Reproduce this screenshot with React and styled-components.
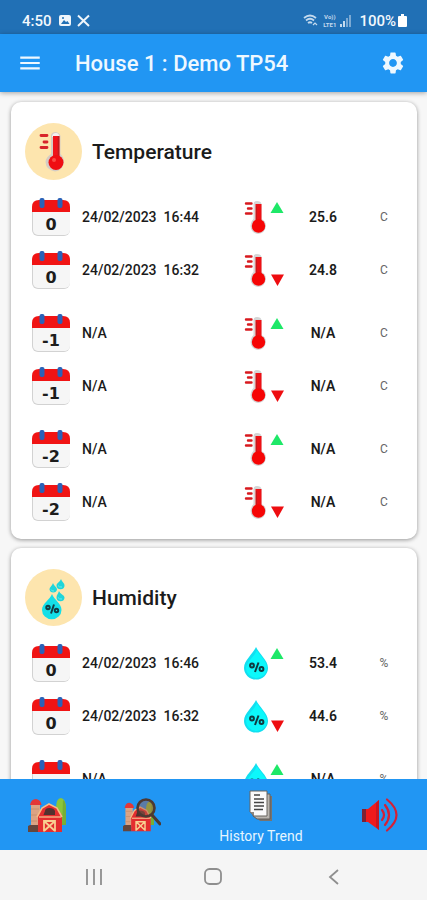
import React from 'react'
import styled, { createGlobalStyle } from 'styled-components'
import { MdMenu, MdSettings } from 'react-icons/md'

const temperature = [
    [
        { day: '0', date: '24/02/2023  16:44', trend: 'up', value: '25.6' },
        { day: '0', date: '24/02/2023  16:32', trend: 'down', value: '24.8' },
    ],
    [
        { day: '-1', date: 'N/A', trend: 'up', value: 'N/A' },
        { day: '-1', date: 'N/A', trend: 'down', value: 'N/A' },
    ],
    [
        { day: '-2', date: 'N/A', trend: 'up', value: 'N/A' },
        { day: '-2', date: 'N/A', trend: 'down', value: 'N/A' },
    ],
]

const humidity = [
    [
        { day: '0', date: '24/02/2023  16:46', trend: 'up', value: '53.4' },
        { day: '0', date: '24/02/2023  16:32', trend: 'down', value: '44.6' },
    ],
    [
        { day: '-1', date: 'N/A', trend: 'up', value: 'N/A' },
        { day: '-1', date: 'N/A', trend: 'down', value: 'N/A' },
    ],
]

const CalendarIcon = ({ day }) => (
    <svg width="38" height="40" viewBox="0 0 38 40">
        <rect x="0" y="5" width="38" height="34" rx="6" fill="#d2d2d2" />
        <rect x="1" y="5" width="37" height="33" rx="5" fill="#f6f6f6" />
        <path d="M0 15V10Q0 3 7 3H31Q38 3 38 10V15Z" fill="#f01414" />
        <rect x="7.500" y="1" width="5" height="10" rx="2" fill="#2a62b8" />
        <rect x="25.500" y="1" width="5" height="10" rx="2" fill="#2a62b8" />
        <text x="19" y="33" textAnchor="middle" fontFamily="DejaVu Sans, sans-serif" fontWeight="700" fontSize="16" fill="#1c1c1c">{day}</text>
    </svg>
)

const Thermometer = () => (
    <>
        <path d="M9.500 8Q9.500 5 13 5Q17 5 17.500 8V23Q22 25 22 30Q21 37.500 14 38Q7 37 6.500 30Q7 25 9.500 23Z" fill="#d5d5d5" />
        <path d="M2 7.500H7.500M4 12.500H7.500M2 17.500H7.500" stroke="#d8191e" strokeWidth="2.400" strokeLinecap="round" />
        <path d="M11.500 8H17.500V25H11.500Z" fill="#ee1015" />
        <path d="M12.500 10V25" stroke="#c41a1c" strokeWidth="1" />
        <circle cx="14.500" cy="30" r="6.700" fill="#f60505" />
    </>
)

const Drop = () => (
    <>
        <path d="M12 5C15 12 24 18 24 26A12 11.500 0 0 1 0 26C0 18 9 12 12 5Z" fill="#12dff0" />
        <path d="M13 8C15 13 23 19 23 26A10.500 10 0 0 1 2 26C3 19 11 14 13 8Z" fill="#0cf8fb" />
        <g fill="none" stroke="#103a40" strokeWidth="2">
            <circle cx="8" cy="23.500" r="1.900" />
            <circle cx="17.500" cy="27" r="1.900" />
            <path d="M14.500 20.500L11 30" />
        </g>
    </>
)

const TrendIcon = ({ kind, trend }) => (
    <svg width="40" height="41" viewBox="0 0 40 41">
        {kind === 'temperature' ? <Thermometer /> : <Drop />}
        {trend === 'up' ? <path d="M33 6L39.500 17H26.500Z" fill="#1ee868" /> : <path d="M27 25.500H40L33.500 37Z" fill="#ee0d10" />}
    </svg>
)

const TemperatureBadge = () => (
    <svg width="57" height="57" viewBox="0 0 57 57">
        <circle cx="28.500" cy="28.500" r="28.500" fill="#fde5ae" />
        <path d="M26 12Q27 9 31 9Q35 10 35.500 13V31Q39 34 39 40Q37 48 30 48.500Q21 47 20.500 39Q21 34 26 31Z" fill="#d5cdc4" />
        <path d="M27 14Q27 10 31 10Q34 10 34.500 14" fill="#f5f0ee" />
        <path d="M16 12.500H22M19 19H22M16 24.500H22" stroke="#d8252a" strokeWidth="2.800" strokeLinecap="round" />
        <path d="M28 13H34.500V35H28Z" fill="#f0141a" />
        <path d="M33.500 13V34" stroke="#bd1c20" strokeWidth="1.500" />
        <circle cx="31" cy="39.500" r="7.500" fill="#ef0d12" />
        <circle cx="29" cy="37" r="2" fill="#fb4a45" />
    </svg>
)

const HumidityBadge = () => (
    <svg width="57" height="57" viewBox="0 0 57 57">
        <circle cx="28.500" cy="28.500" r="28.500" fill="#fde5ae" />
        <path d="M27 25C29 31 36.500 34 36.500 41A9.700 9.300 0 0 1 17 41C17 34 25 31 27 25Z" fill="#14dfe8" />
        <path d="M36 10C37 13 39.500 14 39.500 16.500A3.800 3.500 0 0 1 31.500 16.500C31.500 14 35 13 36 10Z" fill="#1fd5da" />
        <path d="M28 14C29 17 32 18 32 20.500A3.800 3.500 0 0 1 24.500 20.500C24.500 18 27 17 28 14Z" fill="#1fd5da" />
        <path d="M34 22C35 25 39.500 26 39.500 28.500A3.800 3.500 0 0 1 31.500 28.500C31.500 26 33 25 34 22Z" fill="#1fd5da" />
        <path d="M33 16.500Q34 18.500 37 18M26 20.500Q27 22.500 29 22M33 28.500Q34 30.500 37 30" stroke="#64edf0" strokeWidth="1" fill="none" />
        <g fill="none" stroke="#123c44" strokeWidth="2">
            <circle cx="23" cy="38.500" r="1.700" />
            <circle cx="31.500" cy="41.500" r="1.700" />
            <path d="M29 35.500L26 44.500" />
        </g>
    </svg>
)

const Barn = () => (
    <>
        <path d="M28 12Q28 1 33 1Q38 2 38 12V28H29Z" fill="#8cc63a" />
        <path d="M35 3Q38 5 38 12V28H34Z" fill="#76ae35" />
        <rect x="3" y="7" width="9" height="23" fill="#dba384" />
        <path d="M3 12H11M3 18H11M3 24H9" stroke="#c8906e" strokeWidth="1" />
        <path d="M2 8Q3 2 8 2Q13 3 13.500 8Z" fill="#e33737" />
        <path d="M0 29L2 28H10V35H0Z" fill="#65463c" />
        <path d="M10 18L14 11L21 7L29 11L34 18V35H10Z" fill="#e42d2f" />
        <path d="M9 20L14 11L21 7L29 11L34 20" fill="none" stroke="#f6bc85" strokeWidth="1.600" />
        <path d="M17 14Q17 11 21.500 11Q26 11 27 14V18H15.500Z" fill="#52312f" />
        <path d="M11 20H33" stroke="#f6cc94" strokeWidth="1.200" />
        <path d="M16 34.500V24H27V34.500M16 24L27 34M27 24L16 34" fill="none" stroke="#f8cf91" strokeWidth="1.800" />
    </>
)

const HouseIcon = () => (
    <svg width="38" height="36" viewBox="0 0 38 36"><Barn /></svg>
)

const HouseSearchIcon = () => (
    <svg width="38" height="36" viewBox="0 0 38 36">
        <svg x="0" y="4" width="31" height="31" viewBox="0 0 38 36" preserveAspectRatio="none"><Barn /></svg>
        <circle cx="23" cy="11" r="8.500" fill="#a25b4c" fillOpacity=".45" stroke="#4d3933" strokeWidth="2.600" />
        <path d="M29 18L37 27" stroke="#4d3933" strokeWidth="3" strokeLinecap="round" />
    </svg>
)

const HistoryIcon = () => (
    <svg width="24" height="32" viewBox="0 0 24 32">
        <path d="M7 6H23V31H11L7 27Z" fill="#77736f" />
        <path d="M4 4H21V29H8L4 26Z" fill="#b9b5af" stroke="#625e5a" strokeWidth="1" />
        <path d="M1 1H18V26H5L1 22Z" fill="#fafafa" stroke="#69645f" strokeWidth="1" />
        <path d="M1 22H5V26Z" fill="#8b8782" />
        <path d="M5 5H11M5 9H15M5 12.500H15M5 16H15M5 19.500H14" stroke="#454545" strokeWidth="1.400" />
    </svg>
)

const SpeakerIcon = () => (
    <svg width="38" height="36" viewBox="0 0 38 36">
        <path d="M1 12H7L18 3V33L7 25H1Z" fill="#f01a1c" />
        <path d="M1 12H5V25H1Z" fill="#7b2335" />
        <path d="M15 6L18 3V33L15 30Z" fill="#c91622" />
        <path d="M21 13Q25 18 21 23M24 8Q32 18 24 28M26 2.500Q45 18 26 33.500" fill="none" stroke="#d52035" strokeWidth="2.200" strokeLinecap="round" />
    </svg>
)

const StatusIcons = () => (
    <svg width="32" height="13" viewBox="0 0 32 13" fill="none">
        <rect x="0" y="1" width="12" height="11" rx="2" fill="#eef5fb" />
        <path d="M2 10L5 6L7 8L8.500 7L10.500 10Z" fill="#2170b5" />
        <circle cx="4" cy="4" r="1" fill="#2170b5" />
        <path d="M19 1.500L30 12M30 1.500L19 12" stroke="#eef5fb" strokeWidth="2" />
    </svg>
)

const WifiIcon = () => (
    <svg width="16" height="13" viewBox="0 0 16 13" fill="none" stroke="#c4daee" strokeWidth="1.800">
        <path d="M1 4Q7 -1 13 4M3 6.500Q7 3 11 6.500M5 9Q7 7.500 9 9" />
        <path d="M10 11L12 9L14 11" strokeWidth="1.200" />
    </svg>
)

const SignalIcon = () => (
    <svg width="11" height="12" viewBox="0 0 11 12">
        <path d="M0 9H2V12H0ZM3 6H5V12H3Z" fill="#c4daee" />
        <path d="M6 3H8V12H6ZM9 0H11V12H9Z" fill="#7ba9d3" />
    </svg>
)

const BatteryIcon = () => (
    <svg width="9" height="13" viewBox="0 0 9 13">
        <path d="M3 0H6V2H8Q9 2 9 3V12Q9 13 8 13H1Q0 13 0 12V3Q0 2 1 2H3Z" fill="#fff" />
    </svg>
)

const HistoryCard = ({ title, kind, unit, groups }) => (
    <Card>
        <CardHead>
            {kind === 'temperature' ? <TemperatureBadge /> : <HumidityBadge />}
            <h2>{title}</h2>
        </CardHead>
        <Table aria-label={title}>
            {groups.map((rows, index) => (
                <Group key={index}>
                    {rows.map((item) => (
                        <Row key={item.trend}>
                            <td><CalendarIcon day={item.day} /></td>
                            <DateCell>{item.date}</DateCell>
                            <td><TrendIcon kind={kind} trend={item.trend} /></td>
                            <ValueCell>{item.value}</ValueCell>
                            <UnitCell>{unit}</UnitCell>
                        </Row>
                    ))}
                </Group>
            ))}
        </Table>
    </Card>
)

const App = () => {
    return (
        <Screen>
            <GlobalStyle />
            <StatusBar>
                <StatusSide>
                    <span>4:50</span>
                    <StatusIcons />
                </StatusSide>
                <StatusSide $tight>
                    <WifiIcon />
                    <Volte><span>Vo))</span><span>LTE1</span></Volte>
                    <SignalIcon />
                    <Battery>100%<BatteryIcon /></Battery>
                </StatusSide>
            </StatusBar>
            <AppBar>
                <IconButton aria-label="Menu"><MdMenu size={26} /></IconButton>
                <h1>House 1 : Demo TP54</h1>
                <IconButton aria-label="Settings"><MdSettings size={26} /></IconButton>
            </AppBar>
            <Content>
                <HistoryCard title="Temperature" kind="temperature" unit="C" groups={temperature} />
                <HistoryCard title="Humidity" kind="humidity" unit="%" groups={humidity} />
            </Content>
            <TabBar>
                <TabButton aria-label="House"><HouseIcon /></TabButton>
                <TabButton aria-label="House search"><HouseSearchIcon /></TabButton>
                <TabButton $active><HistoryIcon />History Trend</TabButton>
                <TabButton aria-label="Alarm sound"><SpeakerIcon /></TabButton>
            </TabBar>
            <SystemBar>
                <button aria-label="Recent apps">
                    <svg width="16" height="16" viewBox="0 0 16 16"><path d="M1 0V16M8 0V16M15 0V16" stroke="#8e8e8e" strokeWidth="1.800" /></svg>
                </button>
                <button aria-label="Home">
                    <svg width="18" height="18" viewBox="0 0 18 18"><rect x="1" y="1" width="16" height="15" rx="4.500" fill="none" stroke="#8e8e8e" strokeWidth="1.800" /></svg>
                </button>
                <button aria-label="Back">
                    <svg width="11" height="16" viewBox="0 0 11 16"><path d="M10 1L2 8L10 15" fill="none" stroke="#8e8e8e" strokeWidth="1.800" /></svg>
                </button>
            </SystemBar>
        </Screen>
    )
}

export default App

const GlobalStyle = createGlobalStyle`
    *{
        box-sizing:border-box;
        margin:0;
        padding:0;
    }
    body{
        font-family: Roboto, sans-serif;
        color:#1b1b1b;
    }
    button{
        border:none;
        background:none;
        color:inherit;
        font-family:inherit;
        cursor:pointer;
    }
    svg{
        display:block;
        flex-shrink:0;
    }
`;
const Screen = styled.div`
    height:100vh;
    display:flex;
    flex-direction:column;
    background:#f7f7f7;
`;
const StatusBar = styled.div`
    display:flex;
    justify-content:space-between;
    align-items:center;
    height:34px;
    padding:7px 20px 0 22px;
    background:#2170b5;
    color:#f2f8fd;
    font-size:15px;
    font-weight:500;
`;
const StatusSide = styled.div`
    display:flex;
    align-items:center;
    gap:${({ $tight }) => ($tight ? '4px' : '7px')};
`;
const Volte = styled.div`
    display:flex;
    flex-direction:column;
    align-items:center;
    font-size:6px;
    line-height:8px;
    font-weight:700;
    color:#c4daee;
`;
const Battery = styled.div`
    display:flex;
    align-items:center;
    gap:2px;
    padding-left:4px;
`;
const AppBar = styled.header`
    position:relative;
    display:flex;
    align-items:center;
    height:58px;
    padding:0 21px 0 17px;
    background:#2196f3;
    color:#eef8ff;
    box-shadow:0 1px 5px rgba(0,0,0,.35);
    h1{
        flex:1;
        padding-left:32px;
        font-size:22px;
        font-weight:500;
    }
`;
const IconButton = styled.button`
    display:flex;
`;
const Content = styled.main`
    flex:1;
    min-height:0;
    overflow-y:auto;
    scrollbar-width:none;
    display:flex;
    flex-direction:column;
    gap:9px;
    padding:10px;
    padding-left:11px;
`;
const Card = styled.section`
    flex-shrink:0;
    padding:21px 11px 11px 14px;
    border-radius:10px;
    background:#fff;
    box-shadow:0 1px 4px rgba(0,0,0,.4);
`;
const CardHead = styled.div`
    display:flex;
    align-items:center;
    gap:10px;
    margin-bottom:10px;
    h2{
        font-size:21px;
        font-weight:500;
    }
`;
const Table = styled.table`
    display:block;
    padding-left:7px;
`;
const Group = styled.tbody`
    display:block;
    & + &{
        margin-top:10px;
    }
`;
const Row = styled.tr`
    display:grid;
    grid-template-columns:38px 1fr 40px 78px 44px;
    align-items:center;
    height:53px;
    font-size:14px;
    font-weight:500;
`;
const DateCell = styled.td`
    padding-left:12px;
    white-space:pre;
`;
const ValueCell = styled.td`
    text-align:center;
    font-weight:600;
`;
const UnitCell = styled.td`
    text-align:center;
    font-size:12px;
    font-weight:400;
    color:#666;
`;
const TabBar = styled.nav`
    display:grid;
    grid-template-columns:2fr 2fr 3fr 2fr;
    height:71px;
    background:#2196f3;
    color:#e6f5ff;
`;
const TabButton = styled.button`
    display:flex;
    flex-direction:column;
    align-items:center;
    justify-content:center;
    gap:5px;
    padding-top:${({ $active }) => ($active ? '5px' : '0')};
    font-size:14px;
    line-height:18px;
`;
const SystemBar = styled.div`
    display:grid;
    grid-template-columns:repeat(3, 1fr);
    height:50px;
    padding:4px 34px 0;
    background:#f5f5f5;
    button{
        display:flex;
        align-items:center;
        justify-content:center;
    }
`;
